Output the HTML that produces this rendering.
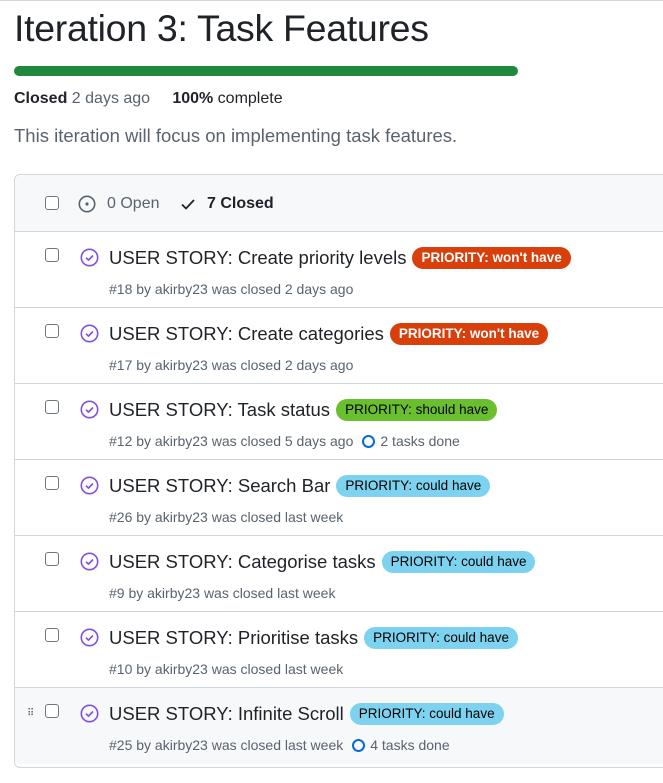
<!DOCTYPE html>
<html><head><meta charset="utf-8"><style>
*{box-sizing:border-box;margin:0;padding:0}
body{width:663px;height:783px;overflow:hidden;background:#fff;font-family:"Liberation Sans",sans-serif;color:#1f2328;position:relative}
.topline{position:absolute;left:0;top:0;width:663px;height:1px;background:#d0d7de}
h1{position:absolute;left:14px;top:7px;font-size:37.5px;font-weight:400;letter-spacing:-0.3px;white-space:nowrap}
.bar{position:absolute;left:14px;top:66px;width:504px;height:10px;border-radius:5px;background:#1f883d}
.meta1{position:absolute;left:14px;top:90px;font-size:16px;white-space:nowrap}
.meta1 b{font-weight:700}
.meta1 span.g{color:#59636e}
.desc{position:absolute;left:14px;top:125px;font-size:18.5px;color:#59636e;white-space:nowrap}
.box{position:absolute;left:14px;top:174px;width:700px;height:594px;border:1px solid #d0d7de;border-radius:6px;overflow:hidden}
.hdr{height:57px;background:#f6f8fa;border-bottom:1px solid #d0d7de;position:relative}
.cb{position:absolute;width:14px;height:14px;border:1.5px solid #6e7781;border-radius:3px;background:#fff}
.hdr .cb{left:30px;top:21px}
.hdr .t{position:absolute;top:20px;font-size:16px;white-space:nowrap}
.row{height:76px;border-bottom:1px solid #d0d7de;position:relative}
.row:last-child{border-bottom:none;background:#f6f8fa}
.row .cb{left:30px;top:16px}
.row svg.ic{position:absolute;left:65px;top:16px}
.title{position:absolute;left:94px;top:15px;font-size:18.5px;white-space:nowrap;display:flex;align-items:center}
.lbl{display:inline-block;margin-left:6px;height:22px;line-height:22px;padding:0 9px;border-radius:11px;font-size:13.5px;font-weight:700;letter-spacing:0}
.red{background:#d93f0b;color:#fff}
.grn{background:#6abf2e;color:#000;font-weight:400}
.blu{background:#7dd3ef;color:#000;font-weight:400}
.sub{position:absolute;left:94px;top:49px;font-size:14px;color:#59636e;white-space:nowrap;display:flex;align-items:center}
.ring{display:inline-block;width:13px;height:13px;border:2.5px solid #0969da;border-radius:50%;margin:0 5px 0 9px}
.drag{position:absolute;left:12px;top:20px;font-size:10px;color:#59636e;letter-spacing:-1px}
</style></head><body>
<div class="topline"></div>
<h1>Iteration 3: Task Features</h1>
<div class="bar"></div>
<div class="meta1"><b>Closed</b> <span class="g">2 days ago</span>&nbsp;&nbsp;&nbsp;&nbsp;&nbsp;<b>100%</b> complete</div>
<div class="desc">This iteration will focus on implementing task features.</div>
<div class="box">
<div class="hdr">
<div class="cb"></div>
<svg style="position:absolute;left:63px;top:20px" width="18" height="18" viewBox="0 0 18 18"><circle cx="9" cy="9" r="7.7" fill="none" stroke="#59636e" stroke-width="1.6"/><circle cx="9" cy="9" r="1.6" fill="#59636e"/></svg>
<div class="t" style="left:92px;color:#59636e">0 Open</div>
<svg style="position:absolute;left:165px;top:22px" width="16" height="14" viewBox="0 0 16 14"><path d="M2 7.5l4 4L14 3" fill="none" stroke="#1f2328" stroke-width="1.8"/></svg>
<div class="t" style="left:192px;font-weight:700">7 Closed</div>
</div>
<div class="row"><div class="cb"></div><svg class="ic" width="19" height="19" viewBox="0 0 19 19"><circle cx="9.5" cy="9.5" r="8.2" fill="none" stroke="#8250df" stroke-width="1.6"/><path d="M6 9.7l2.4 2.4 4.6-4.6" fill="none" stroke="#8250df" stroke-width="1.6"/></svg><div class="title">USER STORY: Create priority levels<span class="lbl red">PRIORITY: won't have</span></div><div class="sub">#18 by akirby23 was closed 2 days ago</div></div>
<div class="row"><div class="cb"></div><svg class="ic" width="19" height="19" viewBox="0 0 19 19"><circle cx="9.5" cy="9.5" r="8.2" fill="none" stroke="#8250df" stroke-width="1.6"/><path d="M6 9.7l2.4 2.4 4.6-4.6" fill="none" stroke="#8250df" stroke-width="1.6"/></svg><div class="title">USER STORY: Create categories<span class="lbl red">PRIORITY: won't have</span></div><div class="sub">#17 by akirby23 was closed 2 days ago</div></div>
<div class="row"><div class="cb"></div><svg class="ic" width="19" height="19" viewBox="0 0 19 19"><circle cx="9.5" cy="9.5" r="8.2" fill="none" stroke="#8250df" stroke-width="1.6"/><path d="M6 9.7l2.4 2.4 4.6-4.6" fill="none" stroke="#8250df" stroke-width="1.6"/></svg><div class="title">USER STORY: Task status<span class="lbl grn">PRIORITY: should have</span></div><div class="sub">#12 by akirby23 was closed 5 days ago<span class="ring"></span>2 tasks done</div></div>
<div class="row"><div class="cb"></div><svg class="ic" width="19" height="19" viewBox="0 0 19 19"><circle cx="9.5" cy="9.5" r="8.2" fill="none" stroke="#8250df" stroke-width="1.6"/><path d="M6 9.7l2.4 2.4 4.6-4.6" fill="none" stroke="#8250df" stroke-width="1.6"/></svg><div class="title">USER STORY: Search Bar<span class="lbl blu">PRIORITY: could have</span></div><div class="sub">#26 by akirby23 was closed last week</div></div>
<div class="row"><div class="cb"></div><svg class="ic" width="19" height="19" viewBox="0 0 19 19"><circle cx="9.5" cy="9.5" r="8.2" fill="none" stroke="#8250df" stroke-width="1.6"/><path d="M6 9.7l2.4 2.4 4.6-4.6" fill="none" stroke="#8250df" stroke-width="1.6"/></svg><div class="title">USER STORY: Categorise tasks<span class="lbl blu">PRIORITY: could have</span></div><div class="sub">#9 by akirby23 was closed last week</div></div>
<div class="row"><div class="cb"></div><svg class="ic" width="19" height="19" viewBox="0 0 19 19"><circle cx="9.5" cy="9.5" r="8.2" fill="none" stroke="#8250df" stroke-width="1.6"/><path d="M6 9.7l2.4 2.4 4.6-4.6" fill="none" stroke="#8250df" stroke-width="1.6"/></svg><div class="title">USER STORY: Prioritise tasks<span class="lbl blu">PRIORITY: could have</span></div><div class="sub">#10 by akirby23 was closed last week</div></div>
<div class="row"><div class="drag">⠿</div><div class="cb"></div><svg class="ic" width="19" height="19" viewBox="0 0 19 19"><circle cx="9.5" cy="9.5" r="8.2" fill="none" stroke="#8250df" stroke-width="1.6"/><path d="M6 9.7l2.4 2.4 4.6-4.6" fill="none" stroke="#8250df" stroke-width="1.6"/></svg><div class="title">USER STORY: Infinite Scroll<span class="lbl blu">PRIORITY: could have</span></div><div class="sub">#25 by akirby23 was closed last week<span class="ring"></span>4 tasks done</div></div>
</div>
</body></html>
